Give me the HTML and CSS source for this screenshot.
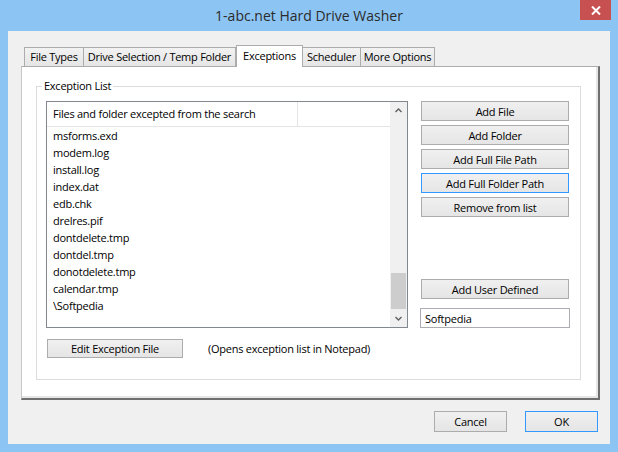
FILE: index.html
```html
<!DOCTYPE html>
<html lang="en">
<head>
  <meta charset="UTF-8">
  <title>1-abc.net Hard Drive Washer</title>
  <link rel="stylesheet" href="styles.css">
</head>
<body>
  <div class="window">
    <div class="titlebar">
      <span class="title-spacer"></span>
      <span class="title">1-abc.net Hard Drive Washer</span>
      <span class="close-btn">
        <svg width="10" height="9" viewBox="0 0 10 9"><path d="M1 0.5 L9 8.5 M9 0.5 L1 8.5" stroke="#fff" stroke-width="2"/></svg>
      </span>
    </div>

    <div class="client">
      <div class="tabs">
        <div class="tab tab-files">File Types</div>
        <div class="tab tab-drive">Drive Selection / Temp Folder</div>
        <div class="tab tab-exceptions active">Exceptions</div>
        <div class="tab tab-scheduler">Scheduler</div>
        <div class="tab tab-more">More Options</div>
      </div>

      <div class="tab-page">
        <fieldset class="group">
          <legend>Exception List</legend>
          <div class="group-top">
            <div class="list">
              <div class="list-body">
                <div class="list-header">
                  <span class="col-main">Files and folder excepted from the search</span>
                  <span class="col-rest"></span>
                </div>
                <ul class="rows">
                  <li>msforms.exd</li>
                  <li>modem.log</li>
                  <li>install.log</li>
                  <li>index.dat</li>
                  <li>edb.chk</li>
                  <li>drelres.pif</li>
                  <li>dontdelete.tmp</li>
                  <li>dontdel.tmp</li>
                  <li>donotdelete.tmp</li>
                  <li>calendar.tmp</li>
                  <li>\Softpedia</li>
                </ul>
              </div>
              <div class="scrollbar">
                <div class="arrow">
                  <svg width="7" height="5" viewBox="0 0 7 5"><path d="M0.5 4 L3.5 1 L6.5 4" fill="none" stroke="#606060" stroke-width="1.4"/></svg>
                </div>
                <div class="track"><div class="thumb"></div></div>
                <div class="arrow">
                  <svg width="7" height="5" viewBox="0 0 7 5"><path d="M0.5 1 L3.5 4 L6.5 1" fill="none" stroke="#606060" stroke-width="1.4"/></svg>
                </div>
              </div>
            </div>

            <div class="actions">
              <button class="btn">Add File</button>
              <button class="btn">Add Folder</button>
              <button class="btn">Add Full File Path</button>
              <button class="btn focused">Add Full Folder Path</button>
              <button class="btn">Remove from list</button>
              <span class="actions-spacer"></span>
              <button class="btn">Add User Defined</button>
              <input class="user-input" type="text" value="Softpedia">
            </div>
          </div>

          <div class="group-bottom">
            <button class="btn btn-edit">Edit Exception File</button>
            <span class="note">(Opens exception list in Notepad)</span>
          </div>
        </fieldset>
      </div>

      <div class="dialog-buttons">
        <button class="btn btn-dialog">Cancel</button>
        <button class="btn btn-dialog focused">OK</button>
      </div>
    </div>
  </div>
</body>
</html>
```

FILE: styles.css
```css
/* Window frame */
body {
  margin: 0;
  background-color: #8cc5f4;
  font-family: "Open Sans", "Noto Sans", sans-serif;
  font-size: 11px;
  letter-spacing: -0.25px;
  color: #000;
}

.window {
  width: 618px;
  height: 452px;
  display: flex;
  flex-direction: column;
}

.titlebar {
  height: 31px;
  display: flex;
  align-items: flex-start;
}

.title-spacer {
  width: 38px;
}

.title {
  flex: 1;
  text-align: center;
  font-size: 14px;
  letter-spacing: 0;
  line-height: 31px;
  color: #2b2b2b;
}

.close-btn {
  width: 31px;
  height: 20px;
  margin-right: 7px;
  background-color: #c75050;
  display: flex;
  align-items: center;
  justify-content: center;
}

.client {
  height: 413px;
  margin: 0 8px;
  background-color: #f0f0f0;
  box-sizing: border-box;
  padding: 14px 0 0 13px;
}

/* Tabs */
.tabs {
  display: flex;
  align-items: flex-end;
  height: 21px;
  padding-left: 3px;
}

.tab {
  height: 19px;
  box-sizing: border-box;
  border: 1px solid #acacac;
  border-bottom: none;
  background: linear-gradient(#f2f2f2, #e5e5e5);
  text-align: center;
  line-height: 18px;
  white-space: nowrap;
}

.tab-files { width: 60px; }
.tab-drive { width: 152px; border-left: none; }
.tab-exceptions { width: 67px; }
.tab-scheduler { width: 58px; border-left: none; }
.tab-more { width: 74px; border-left: none; }

.tab.active {
  height: 22px;
  margin-bottom: -1px;
  background: #fff;
  position: relative;
  line-height: 19px;
}

.tab-page {
  width: 579px;
  height: 334px;
  box-sizing: border-box;
  background-color: #fff;
  border-top: 1px solid #acacac;
  border-left: 1px solid #c6c6c6;
  border-right: 2px solid #6f6f6f;
  border-bottom: 2px solid #6f6f6f;
  box-shadow: inset -2px -2px 0 #e6e6e6;
  padding: 11px 0 0 14px;
}

/* Group box */
.group {
  margin: 0;
  width: 545px;
  height: 302px;
  box-sizing: border-box;
  border: 1px solid #dcdcdc;
  padding: 7px 10px 0 9px;
}

.group legend {
  margin-left: -4px;
  padding: 0 2px;
  line-height: 16px;
}

.group-top {
  display: flex;
  height: 227px;
}

/* List view */
.list {
  width: 362px;
  box-sizing: border-box;
  border: 1px solid #828790;
  display: flex;
}

.list-body {
  flex: 1;
}

.list-header {
  display: flex;
  height: 25px;
  border-bottom: 1px solid #e5e5e5;
  box-sizing: border-box;
}

.col-main {
  width: 251px;
  padding-left: 6px;
  box-sizing: border-box;
  border-right: 1px solid #e5e5e5;
  line-height: 23px;
}

.rows {
  list-style: none;
  margin: 0;
  padding: 0;
}

.rows li {
  height: 17px;
  line-height: 17px;
  padding-left: 6px;
}

.scrollbar {
  width: 17px;
  background-color: #f0f0f0;
  display: flex;
  flex-direction: column;
}

.arrow {
  height: 17px;
  display: flex;
  align-items: center;
  justify-content: center;
}

.track {
  flex: 1;
  display: flex;
  flex-direction: column;
  justify-content: flex-end;
}

.thumb {
  height: 36px;
  margin: 0 1px 1px 1px;
  background-color: #cdcdcd;
}

/* Buttons */
.btn {
  font-family: inherit;
  font-size: 11px;
  letter-spacing: -0.25px;
  color: #000;
  height: 20px;
  padding: 0;
  box-sizing: border-box;
  border: 1px solid #acacac;
  background: linear-gradient(#f0f0f0, #e5e5e5);
  border-radius: 0;
}

.btn.focused {
  border-color: #3399ff;
}

.actions {
  margin-left: 13px;
  width: 148px;
  display: flex;
  flex-direction: column;
}

.actions .btn {
  width: 148px;
  margin-bottom: 4px;
}

.actions-spacer {
  flex: 1;
}

.user-input {
  width: 150px;
  height: 20px;
  margin: 5px 0 0 -1px;
  box-sizing: border-box;
  border: 1px solid #abadb3;
  padding: 0 4px;
  font-family: inherit;
  font-size: 11px;
  letter-spacing: -0.25px;
  outline: none;
}

.group-bottom {
  display: flex;
  align-items: center;
  margin-top: 11px;
}

.btn-edit {
  width: 136px;
  height: 19px;
  margin-left: 1px;
}

.note {
  margin-left: 25px;
}

/* Dialog buttons */
.dialog-buttons {
  display: flex;
  justify-content: flex-end;
  gap: 18px;
  margin-top: 11px;
  padding-right: 12px;
}

.btn-dialog {
  width: 73px;
  height: 21px;
}
```
